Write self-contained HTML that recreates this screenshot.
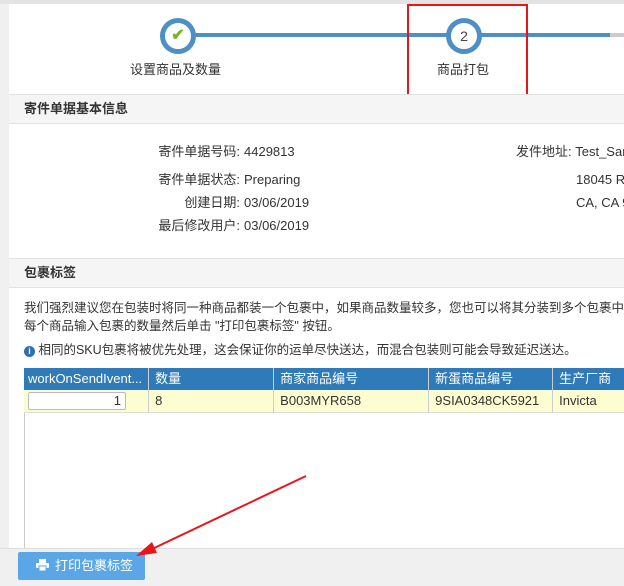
<!DOCTYPE html><html><head><meta charset="utf-8"><style>
*{margin:0;padding:0;box-sizing:border-box}
body{width:624px;height:586px;overflow:hidden;background:#f0f0f0;font-family:"Liberation Sans","Noto Sans CJK SC",sans-serif;font-size:13px;color:#333;position:relative;line-height:16px}
.a{position:absolute}
.panel{left:9px;top:4px;width:615px;height:545px;background:#fff}
.sec{left:9px;width:615px;height:30px;background:#f5f5f5;border-top:1px solid #e2e2e2;border-bottom:1px solid #e2e2e2;font-weight:bold;font-size:13px;padding:6px 0 0 15px}
.lbl{text-align:right;width:160px;left:80px}
td{border-right:1px solid #ccc;padding:0 6px;height:22px;white-space:nowrap;font-size:13px;line-height:16px;vertical-align:middle}
</style></head><body>
<div class="a" style="left:0;top:0;width:624px;height:4px;background:#e4e4e4"></div>
<div class="a panel"></div>
<div class="a" style="left:180px;top:33px;width:430px;height:4px;background:#4e8fc4"></div>
<div class="a" style="left:610px;top:33px;width:14px;height:4px;background:#ccc"></div>
<div class="a" style="left:160px;top:18px;width:36px;height:36px;border-radius:50%;border:5px solid #4e8fc4;background:#fff;text-align:center;line-height:26px;color:#7ab51d;font-size:16px;font-weight:bold">✔</div>
<div class="a" style="left:446px;top:18px;width:36px;height:36px;border-radius:50%;border:5px solid #4e8fc4;background:#fff;text-align:center;line-height:26px;font-size:14px;color:#444">2</div>
<div class="a" style="left:130px;top:62px;font-size:13px">设置商品及数量</div>
<div class="a" style="left:437px;top:62px;font-size:13px">商品打包</div>
<div class="a" style="left:407px;top:4px;width:121px;height:96px;border:2px solid #e8161b"></div>
<div class="a sec" style="top:94px">寄件单据基本信息</div>
<div class="a lbl" style="top:144px">寄件单据号码:</div><div class="a" style="left:244px;top:144px">4429813</div>
<div class="a lbl" style="top:172px">寄件单据状态:</div><div class="a" style="left:244px;top:172px">Preparing</div>
<div class="a lbl" style="top:195px">创建日期:</div><div class="a" style="left:244px;top:195px">03/06/2019</div>
<div class="a lbl" style="top:218px">最后修改用户:</div><div class="a" style="left:244px;top:218px">03/06/2019</div>
<div class="a" style="left:516px;top:144px;white-space:nowrap">发件地址: Test_Sam</div>
<div class="a" style="left:576px;top:172px;white-space:nowrap">18045 R</div>
<div class="a" style="left:576px;top:195px;white-space:nowrap">CA, CA 9</div>
<div class="a sec" style="top:258px">包裹标签</div>
<div class="a" style="left:24px;top:300px;white-space:nowrap;font-size:12.5px">我们强烈建议您在包装时将同一种商品都装一个包裹中，如果商品数量较多，您也可以将其分装到多个包裹中</div>
<div class="a" style="left:24px;top:318px;white-space:nowrap;font-size:12.5px">每个商品输入包裹的数量然后单击 "打印包裹标签" 按钮。</div>
<div class="a" style="left:24px;top:342px;white-space:nowrap;font-size:12.5px"><span style="display:inline-block;width:11px;height:11px;border-radius:50%;background:#2f6fb0;color:#fff;font-size:9px;text-align:center;line-height:11px;font-weight:bold">i</span> 相同的SKU包裹将被优先处理，这会保证你的运单尽快送达，而混合包装则可能会导致延迟送达。</div>
<div class="a" style="left:24px;top:368px;width:600px;height:180px;border-left:1px solid #ccc;background:#fff"></div>
<table class="a" style="left:24px;top:368px;border-collapse:collapse;width:610px">
<tr style="background:#2f7ab9;color:#fff"><td style="width:124px;padding-left:4px">workOnSendIvent...</td><td style="width:125px">数量</td><td style="width:155px">商家商品编号</td><td style="width:124px">新蛋商品编号</td><td>生产厂商</td></tr>
<tr style="background:#fdfdd2;border-bottom:1px solid #ddd"><td style="padding-left:4px"><div style="width:98px;height:18px;border:1px solid #bbb;border-radius:2px;background:#fff;text-align:right;padding-right:4px;line-height:16px">1</div></td><td>8</td><td>B003MYR658</td><td>9SIA0348CK5921</td><td>Invicta</td></tr>
</table>
<div class="a" style="left:0;top:548px;width:624px;height:38px;background:#f0f0f0;border-top:1px solid #ddd"></div>
<div class="a" style="left:18px;top:552px;width:127px;height:28px;background:#5ba6e6;border-radius:2px;color:#fff;font-size:13px;line-height:28px;padding-left:18px">
<svg width="13" height="12" viewBox="0 0 13 12" style="vertical-align:-1px;margin-right:6px"><rect x="3" y="0" width="7" height="4" fill="#fff"/><rect x="0" y="4" width="13" height="5" rx="1" fill="#fff"/><rect x="3" y="7" width="7" height="5" fill="#fff" stroke="#5ba6e6" stroke-width="1"/></svg>打印包裹标签</div>
<svg class="a" style="left:0;top:0" width="624" height="586"><line x1="306" y1="476" x2="150" y2="550" stroke="#e8161b" stroke-width="2"/><polygon points="136,556 152,542 157,553" fill="#e8161b"/></svg>
</body></html>
